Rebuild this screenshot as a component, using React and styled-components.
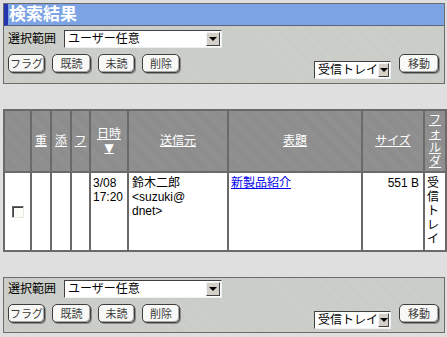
import React from 'react';
import styled, { createGlobalStyle } from 'styled-components';

const GlobalStyle = createGlobalStyle`
  html, body { margin: 0; padding: 0; background: #dfdfdf; }
  body {
    font-family: "Liberation Sans", "Noto Sans CJK JP", sans-serif;
    font-size: 12px;
    color: #000;
  }
`;

const Page = styled.div`
  width: 447px;
  box-sizing: border-box;
  padding: 3px 2px 0 3px;
  display: flex;
  flex-direction: column;
  gap: ${p => p.$gap}px;
`;

const Panel = styled.div`
  border: 1px solid #6c6c6c;
  background-color: #c9cbc6;
  background-image: repeating-linear-gradient(45deg, rgba(255,255,255,0.08) 0 1px, transparent 1px 2px);
`;

const Title = styled.div`
  height: 21px;
  line-height: 21px;
  background: #7ca3e3;
  border-left: 4px solid #2536b0;
  border-bottom: 1px solid #59657d;
  color: #fff;
  font-weight: bold;
  font-size: 17px;
  padding-left: 1px;
`;

const Body = styled.div`
  padding: ${p => p.$top}px 5px ${p => p.$bottom}px 4px;
`;

const SelectRow = styled.div`
  display: flex;
  align-items: center;
  gap: 8px;
  height: 18px;
`;

const Label = styled.span`
  font-size: 12px;
  line-height: 18px;
  white-space: nowrap;
`;

const Select = styled.div`
  width: ${p => p.$w}px;
  height: 18px;
  box-sizing: border-box;
  background: #fff;
  border: 1px solid;
  border-color: #404040 #f0f0f0 #f0f0f0 #404040;
  display: flex;
  align-items: center;
  justify-content: space-between;
  padding-left: 3px;
  font-size: 12px;
  line-height: 16px;
  white-space: nowrap;
`;

const Arrow = styled.span`
  width: 14px;
  height: 14px;
  box-sizing: border-box;
  margin-right: 1px;
  background: #d4d0c8;
  border: 1px solid;
  border-color: #f4f4f4 #404040 #404040 #f4f4f4;
  display: flex;
  align-items: center;
  justify-content: center;
  &::after {
    content: "";
    border-left: 4px solid transparent;
    border-right: 4px solid transparent;
    border-top: 4px solid #000;
  }
`;

const ActionRow = styled.div`
  display: flex;
  justify-content: space-between;
  align-items: flex-start;
  margin-top: 6px;
`;

const Group = styled.div`
  display: flex;
  align-items: flex-start;
  gap: ${p => p.$gap}px;
`;

const Btn = styled.button`
  width: ${p => p.$w || 38}px;
  height: 19px;
  padding: 0;
  box-sizing: border-box;
  font-family: inherit;
  font-size: 11px;
  line-height: 16px;
  white-space: nowrap;
  color: #3c3c3c;
  background: #f8f8f6;
  border: 1px solid #3e3e3e;
  border-radius: 5px;
  box-shadow: inset -1px -1px 0 #a8a8a8, 1px 1px 0 #8a8a8a;
`;

const Lower = styled.div`
  margin-top: 7px;
`;

const Table = styled.table`
  width: 442px;
  border-collapse: collapse;
  table-layout: fixed;
  font-size: 12px;
  line-height: 14px;
`;

const Th = styled.th`
  height: 60px;
  padding: 0;
  background-color: #8b8b8b;
  background-image: repeating-linear-gradient(45deg, rgba(255,255,255,0.06) 0 1px, transparent 1px 2px);
  border: 2px solid #6a6a6a;
  color: #fff;
  font-weight: normal;
  text-align: center;
  vertical-align: middle;
  line-break: anywhere;
  line-height: 14px;
`;

const HeadLink = styled.span`
  color: #fff;
  text-decoration: underline;
`;

const SortMark = styled.span`
  display: block;
  font-family: "DejaVu Sans", sans-serif;
  line-height: 14px;
  font-size: 12px;
  text-decoration: underline;
`;

const Td = styled.td`
  height: 74px;
  padding: ${p => p.$pad || '3px 2px 0 2px'};
  background: #fff;
  border: 2px solid #6a6a6a;
  vertical-align: ${p => p.$valign || 'top'};
  text-align: ${p => p.$align || 'left'};
  line-break: anywhere;
`;

const Check = styled.span`
  display: inline-block;
  width: 12px;
  height: 12px;
  box-sizing: border-box;
  background: #fbfbf8;
  border: 1px solid;
  border-color: #6a6a6a #e8e8e0 #e8e8e0 #6a6a6a;
  box-shadow: inset 1px 1px 0 #404040;
  vertical-align: middle;
`;

const Link = styled.a`
  color: #0000ee;
  text-decoration: underline;
`;

function Controls({ top, bottom }) {
  return (
    <Body $top={top} $bottom={bottom}>
      <SelectRow>
        <Label>選択範囲</Label>
        <Select $w={158}>ユーザー任意<Arrow /></Select>
      </SelectRow>
      <ActionRow>
        <Group $gap={7}>
          <Btn $w={37}>フラグ</Btn>
          <Btn $w={39}>既読</Btn>
          <Btn $w={37}>未読</Btn>
          <Btn $w={38}>削除</Btn>
        </Group>
        <Group $gap={8}>
          <Lower>
            <Select $w={77}>受信トレイ<Arrow /></Select>
          </Lower>
          <Btn $w={40}>移動</Btn>
        </Group>
      </ActionRow>
    </Body>
  );
}

export default function App() {
  const cols = [27, 20, 20, 19, 38, 100, 134, 62, 22];
  return (
    <>
      <GlobalStyle />
      <Page $gap={25}>
        <Panel>
          <Title>検索結果</Title>
          <Controls top={4} bottom={4} />
        </Panel>
        <Table>
          <colgroup>
            {cols.map((w, i) => <col key={i} style={{ width: w }} />)}
          </colgroup>
          <thead>
            <tr>
              <Th></Th>
              <Th><HeadLink>重</HeadLink></Th>
              <Th><HeadLink>添</HeadLink></Th>
              <Th><HeadLink>フ</HeadLink></Th>
              <Th><HeadLink>日時</HeadLink><SortMark>▼</SortMark></Th>
              <Th><HeadLink>送信元</HeadLink></Th>
              <Th><HeadLink>表題</HeadLink></Th>
              <Th><HeadLink>サイズ</HeadLink></Th>
              <Th><HeadLink>フォルダ</HeadLink></Th>
            </tr>
          </thead>
          <tbody>
            <tr>
              <Td $valign="middle" $align="center" $pad="0"><Check /></Td>
              <Td></Td>
              <Td></Td>
              <Td></Td>
              <Td>3/08<br />17:20</Td>
              <Td $pad="3px 2px 0 3px">鈴木二郎<br />&lt;suzuki@<br />dnet&gt;</Td>
              <Td><Link>新製品紹介</Link></Td>
              <Td $align="right" $pad="3px 4px 0 2px">551 B</Td>
              <Td $pad="3px 1px 0 2px">受信トレイ</Td>
            </tr>
          </tbody>
        </Table>
        <Panel>
          <Controls top={2} bottom={3} />
        </Panel>
      </Page>
    </>
  );
}
